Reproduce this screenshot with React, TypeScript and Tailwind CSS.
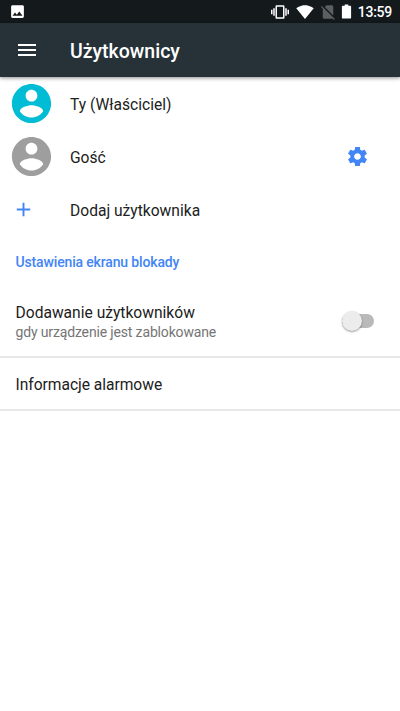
import React from 'react';

interface IconProps {
  path: string;
  className?: string;
}

const ICONS = {
  image: 'M21 19V5c0-1.1-.9-2-2-2H5c-1.1 0-2 .9-2 2v14c0 1.1.9 2 2 2h14c1.1 0 2-.9 2-2zM8.500 13.500l2.500 3.010L14.500 12l4.500 6H5l3.500-4.500z',
  vibration: 'M0 15h2V9H0v6zm3 2h2V7H3v10zm19-8v6h2V9h-2zm-3 8h2V7h-2v10zM16.500 3h-9C6.670 3 6 3.670 6 4.500v15c0 .83.67 1.500 1.500 1.500h9c.83 0 1.500-.67 1.500-1.500v-15c0-.83-.67-1.500-1.500-1.500zM16 19H8V5h8v14z',
  wifi: 'M12.010 21.490L23.640 7c-.45-.34-4.930-4-11.640-4C5.280 3 .81 6.660.36 7l11.630 14.490.01.01.01-.01z',
  noSim: 'M18.990 5c0-1.100-.89-2-1.990-2h-7L7.660 5.340 19 16.680 18.990 5zM3.650 3.880L2.380 5.150 5 7.770V19c0 1.100.9 2 2 2h10.010c.35 0 .67-.1.96-.26l1.880 1.880 1.270-1.270L3.650 3.880z',
  battery: 'M16.900 4H14.500V2h-5v2H7.100C6 4 5.500 4.600 5.500 5.330v15.330C5.500 21.400 6 22 7.100 22h9.800c1.100 0 1.600-.6 1.600-1.330V5.330C18.500 4.600 18 4 16.900 4z',
  menu: 'M3 18h18v-2H3v2zm0-5h18v-2H3v2zm0-7v2h18V6H3z',
  account: 'M12 2C6.480 2 2 6.480 2 12s4.480 10 10 10 10-4.480 10-10S17.520 2 12 2zm0 3c1.660 0 3 1.340 3 3s-1.340 3-3 3-3-1.340-3-3 1.340-3 3-3zm0 14.200c-2.500 0-4.710-1.280-6-3.220.03-1.990 4-3.080 6-3.080 1.990 0 5.970 1.090 6 3.080-1.290 1.940-3.500 3.220-6 3.220z',
  add: 'M19 13h-6v6h-2v-6H5v-2h6V5h2v6h6v2z',
  settings: 'M19.430 12.980c.04-.32.07-.64.07-.98s-.03-.66-.07-.98l2.110-1.650c.19-.15.24-.42.12-.64l-2-3.460c-.12-.22-.39-.3-.61-.22l-2.490 1c-.52-.4-1.080-.73-1.690-.98l-.38-2.650C14.460 2.180 14.250 2 14 2h-4c-.25 0-.46.18-.49.42l-.38 2.650c-.61.25-1.170.59-1.690.98l-2.490-1c-.23-.09-.49 0-.61.22l-2 3.460c-.13.22-.07.49.12.64l2.110 1.650c-.04.32-.07.65-.07.98s.03.66.07.98l-2.110 1.650c-.19.15-.24.42-.12.64l2 3.460c.12.22.39.3.61.22l2.490-1c.52.4 1.080.73 1.690.98l.38 2.650c.03.24.24.42.49.42h4c.25 0 .46-.18.49-.42l.38-2.650c.61-.25 1.170-.59 1.690-.98l2.490 1c.23.09.49 0 .61-.22l2-3.460c.12-.22.07-.49-.12-.64l-2.110-1.650zM12 15.500c-1.930 0-3.500-1.570-3.500-3.500s1.570-3.500 3.500-3.500 3.500 1.570 3.500 3.500-1.570 3.500-3.500 3.500z',
};

const Icon: React.FC<IconProps> = ({ path, className }) => (
  <svg viewBox="0 0 24 24" fill="currentColor" className={`shrink-0 ${className ?? ''}`}>
    <path d={path} />
  </svg>
);

const StatusBar: React.FC = () => (
  <div className="flex h-[23px] items-center justify-between bg-[#14191c] pl-[9px] pr-2 text-white">
    <Icon path={ICONS.image} className="h-[17px] w-[17px]" />
    <div className="flex items-center">
      <Icon path={ICONS.vibration} className="mr-[7px] h-[18px] w-[18px]" />
      <Icon path={ICONS.wifi} className="mr-[5px] h-[18px] w-[18px]" />
      <Icon path={ICONS.noSim} className="mr-px h-[18px] w-[18px] text-[#5b5f61]" />
      <Icon path={ICONS.battery} className="mr-[3px] h-[17px] w-[17px]" />
      <span className="pt-px text-[14px] font-medium leading-none tracking-[-0.25px]">13:59</span>
    </div>
  </div>
);

interface UserRowProps {
  label: string;
  icon: React.ReactNode;
  action?: React.ReactNode;
}

const UserRow: React.FC<UserRowProps> = ({ label, icon, action }) => (
  <div className="flex h-[53px] items-center">
    <div className="flex w-[70px] shrink-0 items-center">{icon}</div>
    <span className="flex-1 pt-[5px] text-[15.6px]">{label}</span>
    {action}
  </div>
);

const App: React.FC = () => {
  return (
    <div className="min-h-[711px] w-[400px] bg-white font-['Roboto',sans-serif] text-[#212121]">
      <StatusBar />

      {/* Toolbar */}
      <header className="flex h-[54px] items-center bg-[#263238] text-white shadow-[0_1px_4px_rgba(0,0,0,0.45)]">
        <div className="w-[70px] pl-[15px]">
          <Icon path={ICONS.menu} className="h-6 w-6" />
        </div>
        <h1 className="pt-[3px] text-[19.5px] font-medium">Użytkownicy</h1>
      </header>

      {/* Users */}
      <UserRow
        label="Ty (Właściciel)"
        icon={<Icon path={ICONS.account} className="ml-2 h-[47px] w-[47px] text-[#00bcd4]" />}
      />
      <UserRow
        label="Gość"
        icon={<Icon path={ICONS.account} className="ml-2 h-[47px] w-[47px] text-[#9e9e9e]" />}
        action={<Icon path={ICONS.settings} className="mr-[31px] h-[23px] w-[23px] text-[#4285f4]" />}
      />
      <UserRow
        label="Dodaj użytkownika"
        icon={<Icon path={ICONS.add} className="ml-3 h-[23px] w-[23px] text-[#4285f4]" />}
      />

      {/* Lock screen settings */}
      <h2 className="flex h-[51px] items-center px-[15.5px] pt-0.5 text-[14px] font-medium tracking-[-0.15px] text-[#4285f4]">
        Ustawienia ekranu blokady
      </h2>
      <div className="flex h-[71px] items-center justify-between border-b-2 border-[#e8e8e8] pl-[15.5px] pr-[26px]">
        <div className="pt-px">
          <div className="text-[15.6px] leading-5">Dodawanie użytkowników</div>
          <div className="text-[14px] leading-[18px] tracking-[-0.15px] text-[#757575]">gdy urządzenie jest zablokowane</div>
        </div>
        <div className="mb-0.5 flex h-[14px] w-8 items-center rounded-full bg-[#b9b9b9]">
          <div className="h-5 w-5 shrink-0 rounded-full bg-[#ececec] shadow-[0_1px_2px_rgba(0,0,0,0.4)]" />
        </div>
      </div>
      <div className="flex h-[53px] items-center border-b-2 border-[#e8e8e8] px-[15.5px] pt-[5px] text-[15.6px] tracking-[-0.03px]">
        Informacje alarmowe
      </div>
    </div>
  );
};

export default App;
